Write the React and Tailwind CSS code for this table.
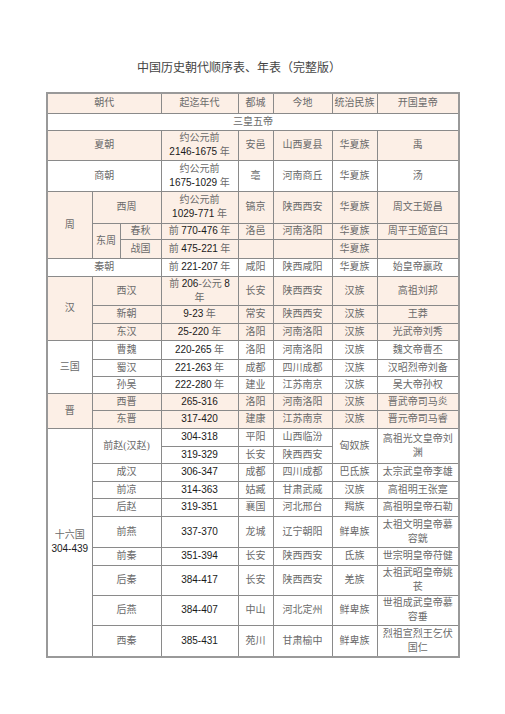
import React from "react";

const N = ({ children }) => (
  <span className="font-['Liberation_Sans',sans-serif] text-[#1a1a1a]">{children}</span>
);

const td = "border border-[#8a8a8a] text-center align-middle px-[2px] py-0 leading-[14px]";

function Row({ bg, h, children }) {
  return (
    <tr className={bg ? "bg-[#fcefe6]" : "bg-white"} style={{ height: h }}>
      {children}
    </tr>
  );
}

export default function App() {
  return (
    <div className="w-[505px] h-[714px] bg-white font-['Liberation_Serif','Noto_Sans_CJK_SC',serif] text-[#6a6a6a]">
      <div className="pt-[61px] pl-[137px] text-[12px] leading-[14px] text-[#444]">
        中国历史朝代顺序表、年表（完整版）
      </div>
      <table className="ml-[46px] mt-[17px] w-[412px] table-fixed border-collapse border-2 border-[#999] text-[10px]">
        <colgroup>
          <col style={{ width: 45 }} />
          <col style={{ width: 28 }} />
          <col style={{ width: 41 }} />
          <col style={{ width: 77 }} />
          <col style={{ width: 35 }} />
          <col style={{ width: 59 }} />
          <col style={{ width: 45 }} />
          <col style={{ width: 82 }} />
        </colgroup>
        <tbody>
          <Row bg h={20}>
            <td colSpan={3} className={td}>朝代</td>
            <td className={td}>起迄年代</td>
            <td className={td}>都城</td>
            <td className={td}>今地</td>
            <td className={td}>统治民族</td>
            <td className={td}>开国皇帝</td>
          </Row>
          <Row h={17}>
            <td colSpan={8} className={td}>三皇五帝</td>
          </Row>
          <Row bg h={30}>
            <td colSpan={3} className={td}>夏朝</td>
            <td className={td}>约公元前<br /><N>2146-1675</N> 年</td>
            <td className={td}>安邑</td>
            <td className={td}>山西夏县</td>
            <td className={td}>华夏族</td>
            <td className={td}>禹</td>
          </Row>
          <Row h={31}>
            <td colSpan={3} className={td}>商朝</td>
            <td className={td}>约公元前<br /><N>1675-1029</N> 年</td>
            <td className={td}>亳</td>
            <td className={td}>河南商丘</td>
            <td className={td}>华夏族</td>
            <td className={td}>汤</td>
          </Row>
          <Row bg h={32}>
            <td rowSpan={3} className={td}>周</td>
            <td colSpan={2} className={td}>西周</td>
            <td className={td}>约公元前<br /><N>1029-771</N> 年</td>
            <td className={td}>镐京</td>
            <td className={td}>陕西西安</td>
            <td className={td}>华夏族</td>
            <td className={td}>周文王姬昌</td>
          </Row>
          <Row bg h={16}>
            <td rowSpan={2} className={td}>东周</td>
            <td className={td}>春秋</td>
            <td className={td}>前 <N>770-476</N> 年</td>
            <td className={td}>洛邑</td>
            <td className={td}>河南洛阳</td>
            <td className={td}>华夏族</td>
            <td className={td}>周平王姬宜臼</td>
          </Row>
          <Row bg h={19}>
            <td className={td}>战国</td>
            <td className={td}>前 <N>475-221</N> 年</td>
            <td className={td}></td>
            <td className={td}></td>
            <td className={td}>华夏族</td>
            <td className={td}></td>
          </Row>
          <Row h={18}>
            <td colSpan={3} className={td}>秦朝</td>
            <td className={td}>前 <N>221-207</N> 年</td>
            <td className={td}>咸阳</td>
            <td className={td}>陕西咸阳</td>
            <td className={td}>华夏族</td>
            <td className={td}>始皇帝嬴政</td>
          </Row>
          <Row bg h={29}>
            <td rowSpan={3} className={td}>汉</td>
            <td colSpan={2} className={td}>西汉</td>
            <td className={td}>前 <N>206</N>-公元 <N>8</N><br />年</td>
            <td className={td}>长安</td>
            <td className={td}>陕西西安</td>
            <td className={td}>汉族</td>
            <td className={td}>高祖刘邦</td>
          </Row>
          <Row bg h={18}>
            <td colSpan={2} className={td}>新朝</td>
            <td className={td}><N>9-23</N> 年</td>
            <td className={td}>常安</td>
            <td className={td}>陕西西安</td>
            <td className={td}>汉族</td>
            <td className={td}>王莽</td>
          </Row>
          <Row bg h={17}>
            <td colSpan={2} className={td}>东汉</td>
            <td className={td}><N>25-220</N> 年</td>
            <td className={td}>洛阳</td>
            <td className={td}>河南洛阳</td>
            <td className={td}>汉族</td>
            <td className={td}>光武帝刘秀</td>
          </Row>
          <Row h={19}>
            <td rowSpan={3} className={td}>三国</td>
            <td colSpan={2} className={td}>曹魏</td>
            <td className={td}><N>220-265</N> 年</td>
            <td className={td}>洛阳</td>
            <td className={td}>河南洛阳</td>
            <td className={td}>汉族</td>
            <td className={td}>魏文帝曹丕</td>
          </Row>
          <Row h={17}>
            <td colSpan={2} className={td}>蜀汉</td>
            <td className={td}><N>221-263</N> 年</td>
            <td className={td}>成都</td>
            <td className={td}>四川成都</td>
            <td className={td}>汉族</td>
            <td className={td}>汉昭烈帝刘备</td>
          </Row>
          <Row h={17}>
            <td colSpan={2} className={td}>孙吴</td>
            <td className={td}><N>222-280</N> 年</td>
            <td className={td}>建业</td>
            <td className={td}>江苏南京</td>
            <td className={td}>汉族</td>
            <td className={td}>吴大帝孙权</td>
          </Row>
          <Row bg h={17}>
            <td rowSpan={2} className={td}>晋</td>
            <td colSpan={2} className={td}>西晋</td>
            <td className={td}><N>265-316</N></td>
            <td className={td}>洛阳</td>
            <td className={td}>河南洛阳</td>
            <td className={td}>汉族</td>
            <td className={td}>晋武帝司马炎</td>
          </Row>
          <Row bg h={18}>
            <td colSpan={2} className={td}>东晋</td>
            <td className={td}><N>317-420</N></td>
            <td className={td}>建康</td>
            <td className={td}>江苏南京</td>
            <td className={td}>汉族</td>
            <td className={td}>晋元帝司马睿</td>
          </Row>
          <Row h={18}>
            <td rowSpan={10} className={td}>十六国<br /><N>304-439</N></td>
            <td colSpan={2} rowSpan={2} className={td}>前赵(汉赵)</td>
            <td className={td}><N>304-318</N></td>
            <td className={td}>平阳</td>
            <td className={td}>山西临汾</td>
            <td rowSpan={2} className={td}>匈奴族</td>
            <td rowSpan={2} className={td}>高祖光文皇帝刘<br />渊</td>
          </Row>
          <Row h={17}>
            <td className={td}><N>319-329</N></td>
            <td className={td}>长安</td>
            <td className={td}>陕西西安</td>
          </Row>
          <Row h={18}>
            <td colSpan={2} className={td}>成汉</td>
            <td className={td}><N>306-347</N></td>
            <td className={td}>成都</td>
            <td className={td}>四川成都</td>
            <td className={td}>巴氐族</td>
            <td className={td}>太宗武皇帝李雄</td>
          </Row>
          <Row h={17}>
            <td colSpan={2} className={td}>前凉</td>
            <td className={td}><N>314-363</N></td>
            <td className={td}>姑臧</td>
            <td className={td}>甘肃武威</td>
            <td className={td}>汉族</td>
            <td className={td}>高祖明王张寔</td>
          </Row>
          <Row h={18}>
            <td colSpan={2} className={td}>后赵</td>
            <td className={td}><N>319-351</N></td>
            <td className={td}>襄国</td>
            <td className={td}>河北邢台</td>
            <td className={td}>羯族</td>
            <td className={td}>高祖明皇帝石勒</td>
          </Row>
          <Row h={31}>
            <td colSpan={2} className={td}>前燕</td>
            <td className={td}><N>337-370</N></td>
            <td className={td}>龙城</td>
            <td className={td}>辽宁朝阳</td>
            <td className={td}>鲜卑族</td>
            <td className={td}>太祖文明皇帝慕<br />容皝</td>
          </Row>
          <Row h={18}>
            <td colSpan={2} className={td}>前秦</td>
            <td className={td}><N>351-394</N></td>
            <td className={td}>长安</td>
            <td className={td}>陕西西安</td>
            <td className={td}>氐族</td>
            <td className={td}>世宗明皇帝苻健</td>
          </Row>
          <Row h={30}>
            <td colSpan={2} className={td}>后秦</td>
            <td className={td}><N>384-417</N></td>
            <td className={td}>长安</td>
            <td className={td}>陕西西安</td>
            <td className={td}>羌族</td>
            <td className={td}>太祖武昭皇帝姚<br />苌</td>
          </Row>
          <Row h={30}>
            <td colSpan={2} className={td}>后燕</td>
            <td className={td}><N>384-407</N></td>
            <td className={td}>中山</td>
            <td className={td}>河北定州</td>
            <td className={td}>鲜卑族</td>
            <td className={td}>世祖成武皇帝慕<br />容垂</td>
          </Row>
          <Row h={32}>
            <td colSpan={2} className={td}>西秦</td>
            <td className={td}><N>385-431</N></td>
            <td className={td}>苑川</td>
            <td className={td}>甘肃榆中</td>
            <td className={td}>鲜卑族</td>
            <td className={td}>烈祖宣烈王乞伏<br />国仁</td>
          </Row>
        </tbody>
      </table>
    </div>
  );
}
